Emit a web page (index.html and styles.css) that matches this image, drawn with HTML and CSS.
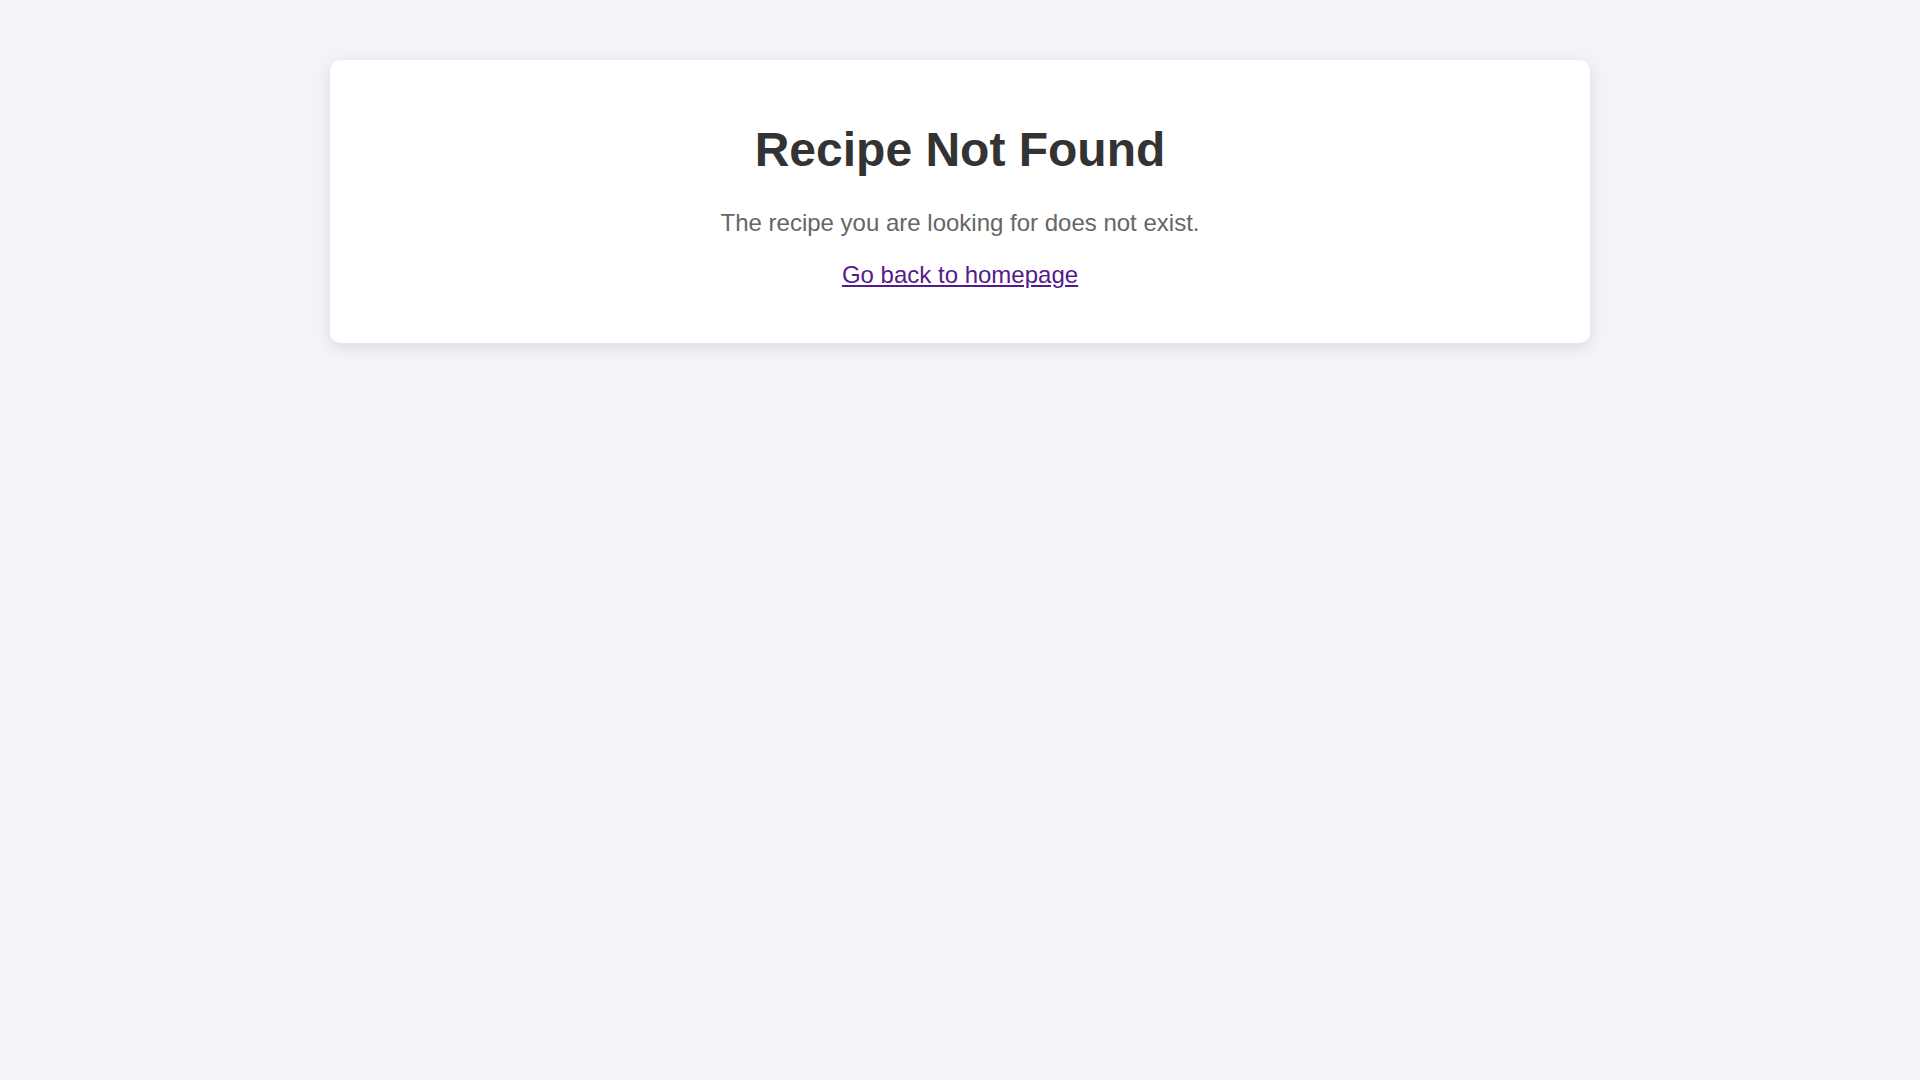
FILE: index.html
```html
<!DOCTYPE html>
<html lang="en">
<head>
<meta charset="utf-8">
<title>Recipe Not Found</title>
<link rel="stylesheet" href="styles.css">
</head>
<body>
<main class="card">
  <h1 class="title">Recipe Not Found</h1>
  <p class="message">The recipe you are looking for does not exist.</p>
  <p class="message"><a class="home-link" href="#">Go back to homepage</a></p>
</main>
</body>
</html>
```
FILE: styles.css
```css
html, body {
  margin: 0;
  padding: 0;
}
body {
  background: #f4f4f8;
  font-family: "Liberation Sans", Arial, sans-serif;
  color: #333;
}
.card {
  display: block;
  max-width: 1200px;
  margin: 60px auto;
  padding: 30px;
  background: #ffffff;
  border-radius: 10px;
  box-shadow: 0 4px 15px rgba(0, 0, 0, 0.1);
  text-align: center;
}
.title {
  font-size: 48px;
  font-weight: bold;
  color: #333333;
  margin: 32px 0;
}
.message {
  font-size: 24px;
  color: #666666;
  margin: 24px 0;
}
.home-link {
  color: #551a8b;
  text-decoration: underline;
}
```
